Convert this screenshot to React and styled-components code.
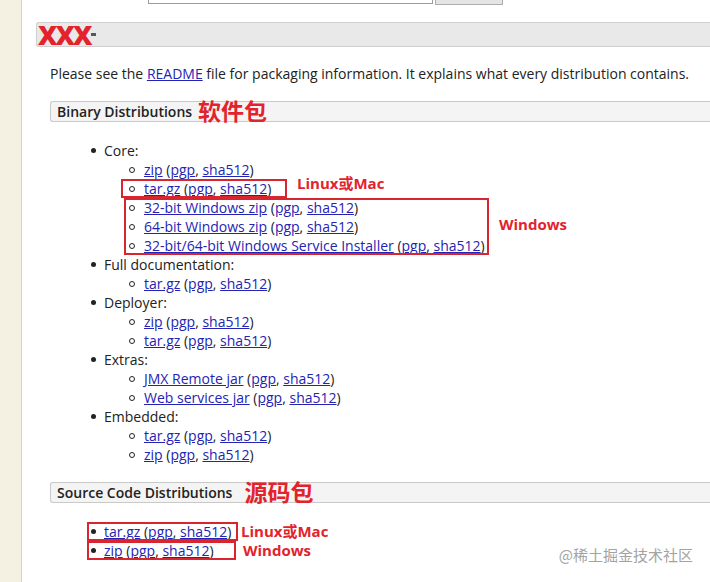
import React from 'react';
import styled, { createGlobalStyle } from 'styled-components';

const GlobalStyle = createGlobalStyle`
  html, body {
    margin: 0;
    padding: 0;
    background: #fff;
  }
  body {
    font-family: "Open Sans", "Noto Sans CJK SC", sans-serif;
    font-size: 14px;
    color: #222;
  }
`;

const Page = styled.div`
  position: relative;
  display: flex;
  height: 582px;
  overflow: hidden;
`;

const Sidebar = styled.div`
  width: 21px;
  flex-shrink: 0;
  background: #f4f0e2;
  border-right: 1px solid #d6d2c4;
`;

const Main = styled.div`
  flex: 1;
  min-width: 0;
  padding-left: 14px;
`;

const SearchRow = styled.div`
  display: flex;
  align-items: flex-end;
  gap: 2px;
  height: 5px;
  padding-left: 112px;
  overflow: hidden;
`;

const SearchInput = styled.input`
  width: 285px;
  height: 22px;
  margin: 0 0 1px;
  box-sizing: border-box;
  border: 1px solid #9c9c9c;
  background: #fff;
`;

const SearchButton = styled.button`
  width: 68px;
  height: 22px;
  box-sizing: border-box;
  border: 1px solid #adadad;
  background: #e4e4e4;
`;

const HeadingBar = styled.div`
  display: flex;
  align-items: center;
  height: 25px;
  margin-top: 17px;
  box-sizing: border-box;
  background: #e9e9e9;
  border: 1px solid #cfcfcf;
  border-right: none;
  border-radius: 3px 0 0 3px;
`;

const Masked = styled.span`
  display: flex;
  align-items: center;
  padding-left: 1px;
  color: #e3232b;
  font-size: 27px;
  font-weight: 800;
  line-height: 1;
  letter-spacing: -2px;

  &::after {
    content: '';
    width: 5px;
    height: 3px;
    margin-left: 0;
    background: #55585e;
  }
`;

const Content = styled.div`
  padding-left: 14px;
`;

const Intro = styled.p`
  margin: 17px 0 0;
  line-height: 19px;
`;

const A = styled.a`
  color: #2424b4;
  text-decoration: underline;
  cursor: pointer;
`;

const SectionBar = styled.div`
  display: flex;
  align-items: center;
  height: 21px;
  margin-top: ${p => p.$top}px;
  box-sizing: border-box;
  padding-left: 6px;
  background: #f4f4f4;
  border: 1px solid #c9c9c9;
  border-right: none;
  border-radius: 3px 0 0 3px;
`;

const SectionTitle = styled.span`
  font-weight: 600;
  line-height: 19px;
`;

const RedTitle = styled.span`
  margin-left: ${p => p.$gap}px;
  color: #e3232b;
  font-size: 23px;
  font-weight: 700;
  line-height: 19px;
`;

const List = styled.div`
  margin-top: 19px;
`;

const Row = styled.div`
  display: flex;
  align-items: center;
  height: 19px;
  padding-left: ${p => p.$pad}px;
  white-space: nowrap;
`;

const Marker = styled.span`
  display: flex;
  align-items: center;
  flex-shrink: 0;
  width: ${p => (p.$disc ? 13 : 15)}px;

  &::before {
    content: '';
    box-sizing: border-box;
    width: ${p => (p.$disc ? 5 : 6)}px;
    height: ${p => (p.$disc ? 5 : 6)}px;
    border-radius: 50%;
    background: ${p => (p.$disc ? '#222' : 'transparent')};
    border: ${p => (p.$disc ? 'none' : '1.2px solid #222')};
  }
`;

const Annot = styled.div`
  display: flex;
  align-items: center;
  margin-left: ${p => p.$x}px;
`;

const Group = styled.div`
  width: ${p => p.$w}px;
  outline: 2px solid #d8252f;
  outline-offset: -2px;
`;

const Label = styled.span`
  margin-left: ${p => p.$gap}px;
  color: #e3232b;
  font-size: 15px;
  font-weight: 700;
  line-height: 19px;
  white-space: nowrap;
  transform: translateY(${p => p.$dy || 0}px);
`;

const Watermark = styled.div`
  position: absolute;
  right: 17px;
  bottom: 18px;
  color: #a3a3a3;
  font-family: "Noto Sans CJK SC", sans-serif;
  font-size: 15px;
  line-height: 18px;
`;

const Dl = ({ name }) => (
  <span>
    <A>{name}</A> (<A>pgp</A>, <A>sha512</A>)
  </span>
);

const Item = ({ children, pad = 41 }) => (
  <Row $pad={pad}>
    <Marker $disc />
    {children}
  </Row>
);

const Sub = ({ name, pad = 79 }) => (
  <Row $pad={pad}>
    <Marker />
    <Dl name={name} />
  </Row>
);

export default function App() {
  return (
    <>
      <GlobalStyle />
      <Page>
        <Sidebar />
        <Main>
          <SearchRow>
            <SearchInput type="text" readOnly />
            <SearchButton type="button" />
          </SearchRow>

          <HeadingBar>
            <Masked>XXX</Masked>
          </HeadingBar>

          <Content>
            <Intro>
              Please see the <A>README</A> file for packaging information. It explains what every distribution contains.
            </Intro>

            <SectionBar $top={18}>
              <SectionTitle>Binary Distributions</SectionTitle>
              <RedTitle $gap={6}>软件包</RedTitle>
            </SectionBar>

            <List>
              <Item>Core:</Item>
              <Sub name="zip" />
              <Annot $x={71}>
                <Group $w={166}>
                  <Sub name="tar.gz" pad={8} />
                </Group>
                <Label $gap={10} $dy={-5}>Linux或Mac</Label>
              </Annot>
              <Annot $x={74}>
                <Group $w={365}>
                  <Sub name="32-bit Windows zip" pad={5} />
                  <Sub name="64-bit Windows zip" pad={5} />
                  <Sub name="32-bit/64-bit Windows Service Installer" pad={5} />
                </Group>
                <Label $gap={10} $dy={-2}>Windows</Label>
              </Annot>
              <Item>Full documentation:</Item>
              <Sub name="tar.gz" />
              <Item>Deployer:</Item>
              <Sub name="zip" />
              <Sub name="tar.gz" />
              <Item>Extras:</Item>
              <Sub name="JMX Remote jar" />
              <Sub name="Web services jar" />
              <Item>Embedded:</Item>
              <Sub name="tar.gz" />
              <Sub name="zip" />
            </List>

            <SectionBar $top={18}>
              <SectionTitle>Source Code Distributions</SectionTitle>
              <RedTitle $gap={12}>源码包</RedTitle>
            </SectionBar>

            <List>
              <Annot $x={37}>
                <Group $w={151}>
                  <Item pad={4}><Dl name="tar.gz" /></Item>
                </Group>
                <Label $gap={3}>Linux或Mac</Label>
              </Annot>
              <Annot $x={37}>
                <Group $w={149}>
                  <Item pad={4}><Dl name="zip" /></Item>
                </Group>
                <Label $gap={7}>Windows</Label>
              </Annot>
            </List>
          </Content>
        </Main>
        <Watermark>@稀土掘金技术社区</Watermark>
      </Page>
    </>
  );
}
